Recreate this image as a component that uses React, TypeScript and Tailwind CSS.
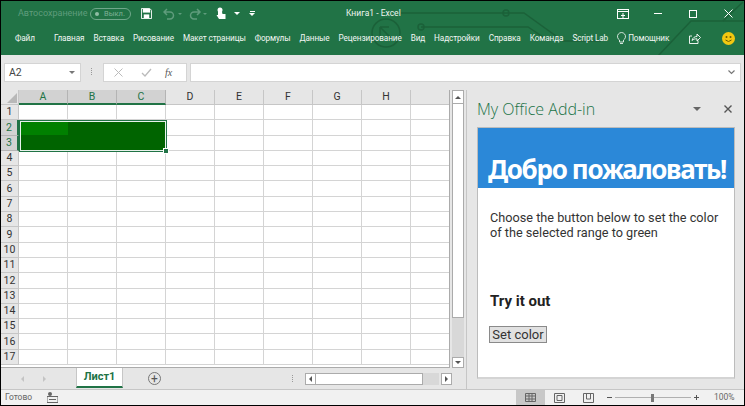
import React from 'react';

const tabs = ['Главная', 'Вставка', 'Рисование', 'Макет страницы', 'Формулы', 'Данные', 'Рецензирование', 'Вид', 'Надстройки', 'Справка', 'Команда', 'Script Lab'];
const columns = ['A', 'B', 'C', 'D', 'E', 'F', 'G', 'H', ''];
const rows = Array.from({ length: 17 }, (_, i) => i + 1);

const Circuit = () => (
  <svg className="absolute left-0 top-0 pointer-events-none" width="745" height="55" fill="none" stroke="#1b6139" strokeWidth="1.5">
    <path d="M400 12 H523 L562 40 H600" />
    <path d="M420 26 H527 L545 38" />
    <circle cx="420" cy="26" r="3" />
    <circle cx="505" cy="12" r="3" />
    <circle cx="385" cy="32" r="14" />
    <path d="M379 26 L391 38 M379 26 H388 M379 26 V35" />
    <path d="M657 55 L690 20 H745" />
    <path d="M722 20 L742 1" />
  </svg>
);

const App: React.FC = () => {
  return (
    <div className="w-[745px] h-[406px] overflow-hidden bg-black pt-px pb-px px-px flex flex-col font-['Roboto',sans-serif] text-[#444]">
      {/* title bar + ribbon tabs */}
      <div className="relative h-[54px] shrink-0 bg-[#217346] text-white overflow-hidden">
        <Circuit />
        <div className="relative h-[25px] flex items-center">
          <span className="ml-[17px] w-[66px] text-[9px] text-[#5f9c7c] whitespace-nowrap">Автосохранение</span>
          <div className="ml-[6px] w-[41px] h-[12px] rounded-full border border-[#6fa78a] flex items-center">
            <span className="ml-[4px] w-[4px] h-[4px] rounded-full bg-[#8fbca4]" />
            <span className="ml-[5px] text-[7.5px] text-[#7fb196]">Выкл.</span>
          </div>
          <svg className="ml-[10px]" width="11" height="11" viewBox="0 0 12 12">
            <path d="M0.5 0.5H9.5L11.5 2.5V11.5H0.5Z" fill="none" stroke="#fff" />
            <rect x="2" y="1" width="8" height="4" fill="#fff" />
            <rect x="3" y="7" width="6" height="4" fill="#fff" />
          </svg>
          <svg className="ml-[11px]" width="44" height="12" viewBox="0 0 44 12" fill="none" stroke="#5f9c7c" strokeWidth="1.5">
            <path d="M2 4 H7 A3.5 3.5 0 0 1 7 11 H4 M4 1 L1 4 L4 7" />
            <path d="M36 4 H31 A3.5 3.5 0 0 0 31 11 H34 M34 1 L37 4 L34 7" />
            <path d="M15 5 H19 L17 7Z" fill="#5f9c7c" stroke="none" />
            <path d="M40 5 H44 L42 7Z" fill="#5f9c7c" stroke="none" />
          </svg>
          <svg className="ml-[9px]" width="10" height="13" viewBox="0 0 10 13" fill="#fff">
            <circle cx="4" cy="3" r="2.5" />
            <path d="M2 5 H6 L6.5 7 H9.5 V12 H3 L0.5 8 L2 8Z" />
          </svg>
          <span className="ml-[8px] w-0 h-0 border-x-[3px] border-x-transparent border-t-[3px] border-t-white" />
          <div className="ml-[9px] flex flex-col items-center gap-px">
            <span className="w-[5px] h-px bg-white" />
            <span className="w-0 h-0 border-x-[3px] border-x-transparent border-t-[3px] border-t-white" />
          </div>
          <span className="ml-[91px] text-[8.5px] text-[#eef5f0] whitespace-nowrap">Книга1 - Excel</span>
          <svg className="ml-auto" width="12" height="10" viewBox="0 0 12 10" fill="none" stroke="#fff">
            <rect x="0.5" y="0.5" width="11" height="9" />
            <path d="M1 2.5H11M6 4V9M4 6.5H8" />
          </svg>
          <span className="ml-[25px] w-[8px] h-px bg-white" />
          <span className="ml-[27px] w-[8px] h-[8px] border border-white" />
          <svg className="ml-[27px] mr-[11px]" width="9" height="9" viewBox="0 0 9 9" stroke="#fff" fill="none">
            <path d="M0.5 0.5L8.5 8.5M8.5 0.5L0.5 8.5" />
          </svg>
        </div>
        <div className="relative h-[24px] flex items-center text-[8.2px] tracking-[-0.1px] text-[#f2f7f4] whitespace-nowrap">
          <span className="ml-[14px] w-[39px]">Файл</span>
          <div className="flex gap-[9px]">
            {tabs.map((t) => (
              <span key={t}>{t}</span>
            ))}
          </div>
          <svg className="ml-[9px]" width="9" height="13" viewBox="0 0 9 13" fill="none" stroke="#fff" strokeWidth="0.8">
            <path d="M2.5 8 A4 4 0 1 1 6.5 8 V10 H2.5Z M3 11.5H6" />
          </svg>
          <span className="ml-[2px]">Помощник</span>
          <svg className="ml-auto" width="12" height="11" viewBox="0 0 12 11" fill="none" stroke="#fff" strokeWidth="0.9">
            <path d="M3 3H0.5V10.5H9V7.5" />
            <path d="M3 7.5C3.5 4.5 6 3.5 8 3.5V1L11.5 4.5L8 8V5.8C6 5.8 4.5 6 3 7.5Z" />
          </svg>
          <svg className="ml-[21px] mr-[9px]" width="13" height="13" viewBox="0 0 13 13">
            <circle cx="6.5" cy="6.5" r="6.5" fill="#f2c811" />
            <circle cx="4.5" cy="5" r="1" fill="#6b5a00" />
            <circle cx="8.5" cy="5" r="1" fill="#6b5a00" />
            <path d="M3.5 8 Q6.5 11 9.5 8" fill="none" stroke="#6b5a00" />
          </svg>
        </div>
      </div>

      {/* formula bar */}
      <div className="h-[35px] shrink-0 bg-[#e6e6e6] flex items-start pt-[8px] pl-[3px] pr-[3px]">
        <div className="w-[77px] h-[19px] bg-white border border-[#d4d4d4] flex items-center justify-between pl-[4px] pr-[5px] text-[10.5px] text-[#444]">
          <span>A2</span>
          <span className="w-0 h-0 border-x-[3px] border-x-transparent border-t-[3px] border-t-[#777]" />
        </div>
        <div className="ml-[10px] mt-[5px] flex flex-col gap-px">
          <span className="w-px h-px bg-[#999]" />
          <span className="w-px h-px bg-[#999]" />
          <span className="w-px h-px bg-[#999]" />
          <span className="w-px h-px bg-[#999]" />
        </div>
        <div className="ml-[11px] w-[84px] h-[19px] bg-white border border-[#d4d4d4] flex items-center">
          <svg className="ml-[10px]" width="9" height="9" viewBox="0 0 9 9" stroke="#bbb" fill="none">
            <path d="M0.5 0.5L8.5 8.5M8.5 0.5L0.5 8.5" />
          </svg>
          <svg className="ml-[18px]" width="11" height="9" viewBox="0 0 11 9" stroke="#bbb" fill="none" strokeWidth="1.3">
            <path d="M1 5L4 8L10 1" />
          </svg>
          <span className="ml-[13px] font-['Liberation_Serif',serif] italic text-[10px] text-[#555]">fx</span>
        </div>
        <div className="ml-[3px] flex-1 h-[19px] bg-white border border-[#d4d4d4] flex items-center justify-end pr-[5px]">
          <svg width="7" height="5" viewBox="0 0 7 5" fill="none" stroke="#777" strokeWidth="1.2">
            <path d="M0.5 0.5L3.5 3.5L6.5 0.5" />
          </svg>
        </div>
      </div>

      {/* workspace */}
      <div className="flex-1 min-h-0 flex bg-[#e6e6e6]">
        <div className="w-[465px] shrink-0 flex flex-col">
          <div className="h-[278px] flex">
            <div className="w-[449px] h-full overflow-hidden relative bg-white border-r border-b border-[#ababab] text-[10.5px]">
              <div className="grid grid-cols-[18px_repeat(8,49px)_40px] grid-rows-[15px_repeat(17,15.3px)]">
                <div className="bg-[#e6e6e6] border-r border-b border-[#c6c6c6] flex items-end justify-end">
                  <span className="w-0 h-0 border-l-[10px] border-l-transparent border-b-[10px] border-b-[#b8b8b8] mr-px mb-px" />
                </div>
                {columns.map((c, i) => (
                  <div
                    key={i}
                    className={i < 3
                      ? 'bg-[#d2d2d2] border-r border-[#b4b4b4] border-b-2 border-b-[#217346] flex items-center justify-center text-[#217346]'
                      : 'bg-[#e6e6e6] border-r border-b border-[#c6c6c6] flex items-center justify-center text-[#333]'}
                  >
                    {c}
                  </div>
                ))}
                {rows.map((r) => (
                  <React.Fragment key={r}>
                    <div
                      className={r === 2 || r === 3
                        ? 'bg-[#d2d2d2] border-r-2 border-r-[#217346] border-b border-b-[#b4b4b4] flex items-center justify-center text-[#217346]'
                        : 'bg-[#e6e6e6] border-r border-b border-[#c6c6c6] flex items-center justify-center text-[#333]'}
                    >
                      {r}
                    </div>
                    {columns.map((_, i) => (
                      <div key={i} className="border-r border-b border-[#d4d4d4]" />
                    ))}
                  </React.Fragment>
                ))}
              </div>
              {/* selected range */}
              <div className="absolute left-[18px] top-[30px] w-[148px] h-[32px] border border-[#217346]">
                <div className="w-full h-full bg-[#006400] border border-[#e8f2ec]">
                  <div className="w-[47px] h-[13px] bg-[#008000]" />
                </div>
              </div>
              <div className="absolute left-[162px] top-[58px] w-[4px] h-[4px] bg-[#217346] border border-white box-content" />
            </div>
            <div className="w-[16px] flex flex-col pl-[2px] pr-[2px]">
              <div className="h-[14px] bg-white border border-[#ababab] flex items-center justify-center">
                <span className="w-0 h-0 border-x-[3px] border-x-transparent border-b-[3px] border-b-[#555]" />
              </div>
              <div className="h-[214px] bg-white border-x border-b border-[#ababab]" />
              <div className="flex-1 bg-[#d8d8d8]" />
              <div className="h-[11px] bg-white border border-[#ababab] flex items-center justify-center">
                <span className="w-0 h-0 border-x-[3px] border-x-transparent border-t-[3px] border-t-[#555]" />
              </div>
            </div>
          </div>
          {/* sheet tabs */}
          <div className="flex-1 flex items-start">
            <span className="ml-[20px] mt-[8px] w-0 h-0 border-y-[3px] border-y-transparent border-r-[3px] border-r-[#c4c4c4]" />
            <span className="ml-[19px] mt-[8px] w-0 h-0 border-y-[3px] border-y-transparent border-l-[3px] border-l-[#c4c4c4]" />
            <div className="ml-[30px] w-[47px] h-[20px] bg-white border-x border-[#c6c6c6] border-b-2 border-b-[#217346] flex items-center justify-center text-[11px] font-bold text-[#217346]">
              Лист1
            </div>
            <div className="ml-[25px] mt-[4px] w-[13px] h-[13px] rounded-full border border-[#777] flex items-center justify-center text-[12px] leading-none text-[#555]">+</div>
            <div className="ml-[131px] mt-[7px] flex flex-col gap-px">
              <span className="w-px h-px bg-[#999]" />
              <span className="w-px h-px bg-[#999]" />
              <span className="w-px h-px bg-[#999]" />
              <span className="w-px h-px bg-[#999]" />
            </div>
            <div className="ml-[12px] mt-[5px] w-[11px] h-[12px] bg-white border border-[#ababab] flex items-center justify-center">
              <span className="w-0 h-0 border-y-[3px] border-y-transparent border-r-[3px] border-r-[#555]" />
            </div>
            <div className="w-[107px] h-[12px] mt-[5px] bg-white border-y border-r border-[#ababab]" />
            <div className="w-[16px] h-[12px] mt-[5px] bg-[#d8d8d8]" />
            <div className="ml-[2px] w-[11px] h-[12px] mt-[5px] bg-white border border-[#ababab] flex items-center justify-center">
              <span className="w-0 h-0 border-y-[3px] border-y-transparent border-l-[3px] border-l-[#555]" />
            </div>
          </div>
        </div>

        {/* task pane */}
        <div className="flex-1 border-l border-[#c6c6c6] pl-[10px] pr-[9px] flex flex-col">
          <div className="h-[37px] flex items-center">
            <span className="text-[16px] text-[#217346] font-['Open_Sans',sans-serif] font-light mt-[1px]">My Office Add-in</span>
            <span className="ml-auto w-0 h-0 border-x-[4px] border-x-transparent border-t-[4px] border-t-[#666]" />
            <svg className="ml-[23px] mr-[3px]" width="8" height="8" viewBox="0 0 8 8" stroke="#555" strokeWidth="1.4" fill="none">
              <path d="M0.5 0.5L7.5 7.5M7.5 0.5L0.5 7.5" />
            </svg>
          </div>
          <div className="h-[252px] bg-white border border-[#bcbcbc] border-b-2 border-b-[#d4d4d4] text-[#333]">
            <div className="h-[60px] bg-[#2b88d8] flex items-end pl-[10px] pb-[1px]">
              <span className="text-[26px] leading-[36px] font-bold text-white whitespace-nowrap tracking-[-1.35px] font-['Noto_Sans',sans-serif]">Добро пожаловать!</span>
            </div>
            <p className="mx-[12px] mt-[22px] text-[12.7px] leading-[15px]">
              Choose the button below to set the color of the selected range to green
            </p>
            <h2 className="mx-[12px] mt-[51px] text-[15px] leading-[20px] font-bold text-[#222]">Try it out</h2>
            <button className="ml-[11px] mt-[15px] w-[58px] h-[17px] bg-[#e1e1e1] border border-[#8a8a8a] text-[13px] leading-none text-[#333] flex items-center justify-center">
              Set color
            </button>
          </div>
        </div>
      </div>

      {/* status bar */}
      <div className="h-[16px] shrink-0 bg-[#f1f1f1] border-t border-[#c6c6c6] flex items-center text-[8.5px] text-[#666]">
        <span className="ml-[4px] w-[27px]">Готово</span>
        <svg className="ml-[15px]" width="11" height="11" viewBox="0 0 11 11" fill="#666">
          <circle cx="3" cy="2" r="2" />
          <rect x="0" y="4.5" width="11" height="6" fill="none" stroke="#666" />
          <path d="M2 7H9V8H2Z" />
        </svg>
        <div className="ml-auto flex items-center h-full">
          <div className="w-[29px] h-full bg-[#c8c8c8] flex items-center justify-center">
            <svg width="11" height="9" viewBox="0 0 11 9" fill="none" stroke="#666">
              <path d="M0.5 0.5H10.5V8.5H0.5ZM0.5 3H10.5M0.5 6H10.5M4 0.5V8.5M7 0.5V8.5" />
            </svg>
          </div>
          <svg className="ml-[9px]" width="11" height="10" viewBox="0 0 11 10" fill="none" stroke="#666">
            <path d="M0.5 0.5H10.5V9.5H0.5ZM3 2.5H8V7.5H3Z" />
          </svg>
          <svg className="ml-[18px]" width="11" height="10" viewBox="0 0 11 10" fill="none" stroke="#666">
            <path d="M0.5 0.5H10.5V9.5H0.5ZM3.5 0.5V6H7.5V0.5" />
          </svg>
          <span className="ml-[13px] w-[5px] h-px bg-[#555]" />
          <div className="ml-[3px] w-[76px] h-px bg-[#b0b0b0] relative flex items-center">
            <span className="absolute left-[36px] w-[3px] h-[8px] bg-[#777]" />
          </div>
          <span className="ml-[3px] w-[5px] h-px bg-[#555] relative">
            <span className="absolute left-[2px] -top-[2px] w-px h-[5px] bg-[#555]" />
          </span>
          <span className="ml-[15px] mr-[12px] w-[18px] text-[#666]">100%</span>
        </div>
      </div>
    </div>
  );
};

export default App;
